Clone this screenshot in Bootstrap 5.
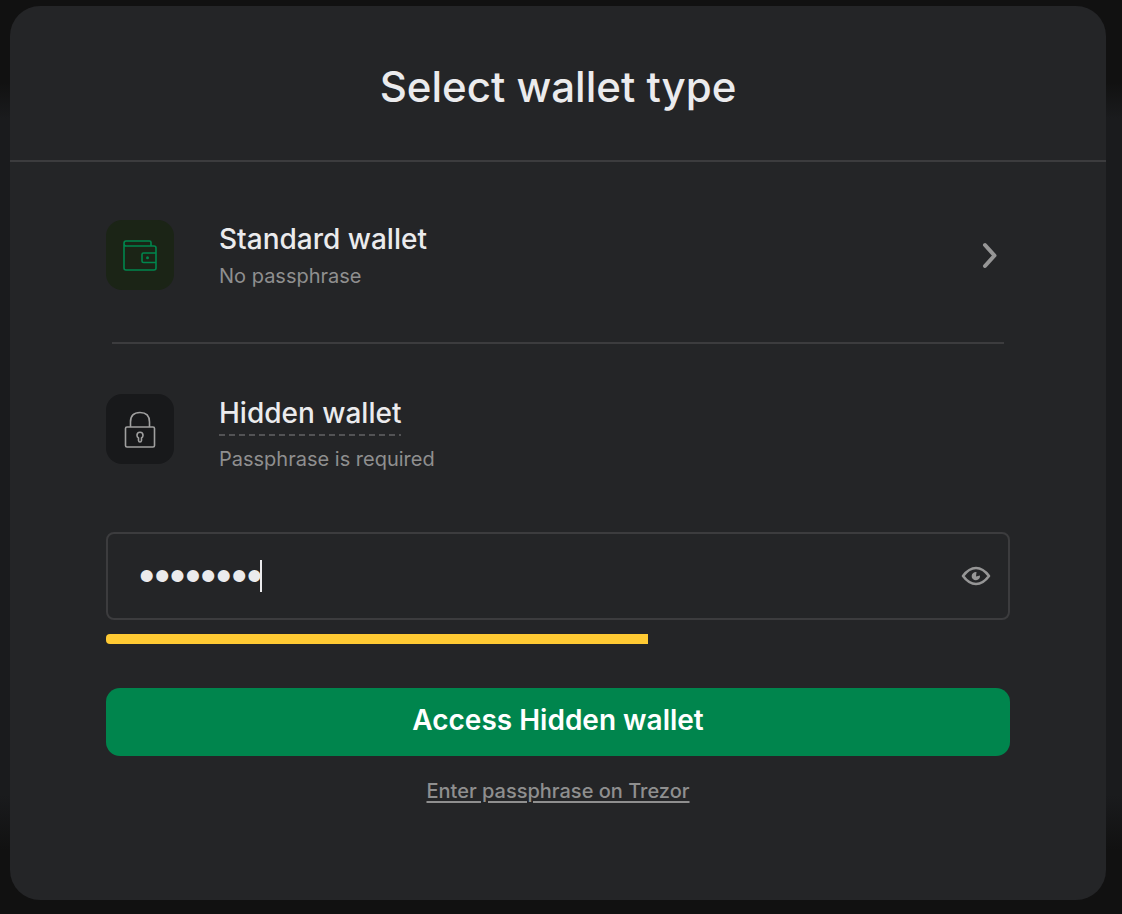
<!DOCTYPE html>
<html lang="en">
<head>
<meta charset="utf-8">
<meta name="viewport" content="width=device-width, initial-scale=1">
<title>Select wallet type</title>
<link href="https://cdn.jsdelivr.net/npm/bootstrap@5.3.0/dist/css/bootstrap.min.css" rel="stylesheet">
<style>
  body {
    font-family: Inter, "Liberation Sans", sans-serif;
    color: #ebebed;
    background: linear-gradient(#111 0, #111 9%, #1a1b1d 13%, #1a1b1d 87%, #111 93%, #111 100%);
    padding: 6px 16px 14px 10px;
  }
  .wallet-modal { background: #242527; border-radius: 30px; }
  .modal-top { height: 156px; padding-top: 8px; border-bottom: 2px solid #3c3c3e; }
  .modal-top h1 { font-size: 42px; line-height: 52px; font-weight: 500; }
  .modal-main { padding: 58px 96px 80px; }
  .wallet-row { gap: 45px; color: inherit; text-align: left; }
  .wallet-name { font-size: 28px; line-height: 38px; font-weight: 500; }
  .muted-note { margin-top: 4px; font-size: 20px; line-height: 28px; color: #8f8f8f; }
  .icon-tile { width: 68px; height: 70px; border-radius: 16px; background: #18191b; }
  .icon-tile.green { background: #1b2416; }
  .divider { margin: 52px 6px 50px; border-top: 2px solid #3c3c3e; }
  .dashed { padding-bottom: 4px; background: repeating-linear-gradient(90deg, #535355 0 6px, transparent 6px 10px) bottom / 100% 2px no-repeat; }
  .dashed + .muted-note { margin-top: 9px; }
  .pass-box { height: 88px; margin-top: 59px; border: 2px solid #3c3c3e; border-radius: 8px; padding: 0 17px 0 31px; }
  .pass-input { color: #ebebed; font: 44px/52px "Liberation Sans", sans-serif; caret-color: transparent; outline: 0; }
  .caret { left: 152px; top: 26px; width: 2px; height: 32px; background: #ebebed; }
  .strength { height: 10px; margin-top: 14px; border-radius: 4px; background: none; }
  .strength .progress-bar { background: #ffca33; }
  .access-btn { height: 68px; margin-top: 44px; border-radius: 14px; background: #00854d; color: #fff; font-size: 28px; line-height: 36px; font-weight: 600; }
  .access-btn:hover { background: #00753f; color: #fff; }
  .device-link { margin-top: 21px; font-size: 20px; line-height: 28px; font-weight: 500; color: #8f8f8f; text-underline-offset: 3px; text-decoration-thickness: 2px; }
</style>
</head>
<body class="d-flex flex-column min-vh-100">
<main class="wallet-modal flex-grow-1">
  <header class="modal-top d-flex align-items-center justify-content-center">
    <h1 class="m-0">Select wallet type</h1>
  </header>
  <div class="modal-main">
    <button type="button" class="wallet-row d-flex align-items-center w-100 p-0 border-0 bg-transparent">
      <span class="icon-tile green d-flex align-items-center justify-content-center flex-shrink-0">
        <svg width="36" height="34" viewBox="0 -1 36 34" fill="none" stroke="#00854d" stroke-width="1.6" stroke-linejoin="round" aria-hidden="true">
          <path d="M29 7V3.5Q29 2 27.500 2H4Q2 2 2 4.500T4 7H32Q34 7 34 9V29Q34 31 32 31H4Q2 31 2 29V4.500M34 14H21.500Q20 14 20 15.500V22Q20 23.500 21.500 23.500H34"/>
          <circle cx="25.500" cy="18.800" r="1.500" fill="#00854d" stroke="none"/>
        </svg>
      </span>
      <span class="flex-grow-1">
        <span class="wallet-name d-block">Standard wallet</span>
        <span class="muted-note d-block">No passphrase</span>
      </span>
      <svg class="me-2" width="24" height="28" viewBox="1 0 24 28" fill="none" stroke="#969696" stroke-width="4" stroke-linecap="round" stroke-linejoin="round" aria-hidden="true"><path d="M8 4L17.500 14.500L8 25"/></svg>
    </button>
    <div class="divider"></div>
    <div class="wallet-row d-flex align-items-start">
      <span class="icon-tile d-flex align-items-center justify-content-center flex-shrink-0">
        <svg width="34" height="40" viewBox="0 0 34 40" fill="none" stroke="#a0a0a0" stroke-width="1.600" stroke-linejoin="round" aria-hidden="true">
          <rect x="2.500" y="18" width="29" height="20" rx="1.500"/>
          <path d="M7.500 18V13Q7.500 3.500 17 3.500T26.500 13V18"/>
          <path d="M15.500 29Q14 28 14 26.200A3 3 0 0 1 20 26.200Q20 28 18.500 29V31.500Q18.300 33 17 33T15.500 31.500Z"/>
        </svg>
      </span>
      <div class="d-flex flex-column align-items-start">
        <h2 class="wallet-name dashed mb-0">Hidden wallet</h2>
        <label class="muted-note" for="pass">Passphrase is required</label>
      </div>
    </div>
    <form onsubmit="return false">
      <div class="pass-box d-flex align-items-center position-relative">
        <input id="pass" type="password" class="pass-input flex-grow-1 w-100 p-0 border-0 bg-transparent" value="mypass12" autocomplete="off">
        <span class="caret position-absolute" aria-hidden="true"></span>
        <button type="button" class="btn p-0 border-0 d-flex" aria-label="Show passphrase">
          <svg width="30" height="24" viewBox="0 0 30 24" fill="none" stroke="#969696" stroke-width="2.600" stroke-linejoin="round" aria-hidden="true">
            <path d="M2 12Q8 4 15 4T28 12Q22 20 15 20T2 12Z"/>
            <path d="M15.500 8A4.200 4.200 0 1 0 19 11.500L15 12.500Z" fill="#969696" stroke="none"/>
          </svg>
        </button>
      </div>
      <div class="progress strength" role="progressbar" aria-label="Passphrase strength" aria-valuenow="60" aria-valuemin="0" aria-valuemax="100">
        <div class="progress-bar" style="width: 60%"></div>
      </div>
      <button type="submit" class="btn access-btn w-100 border-0 p-0 pb-1">Access Hidden wallet</button>
    </form>
    <div class="text-center"><a href="#" class="device-link d-inline-block">Enter passphrase on Trezor</a></div>
  </div>
</main>
<script src="https://cdn.jsdelivr.net/npm/bootstrap@5.3.0/dist/js/bootstrap.bundle.min.js"></script>
</body>
</html>
